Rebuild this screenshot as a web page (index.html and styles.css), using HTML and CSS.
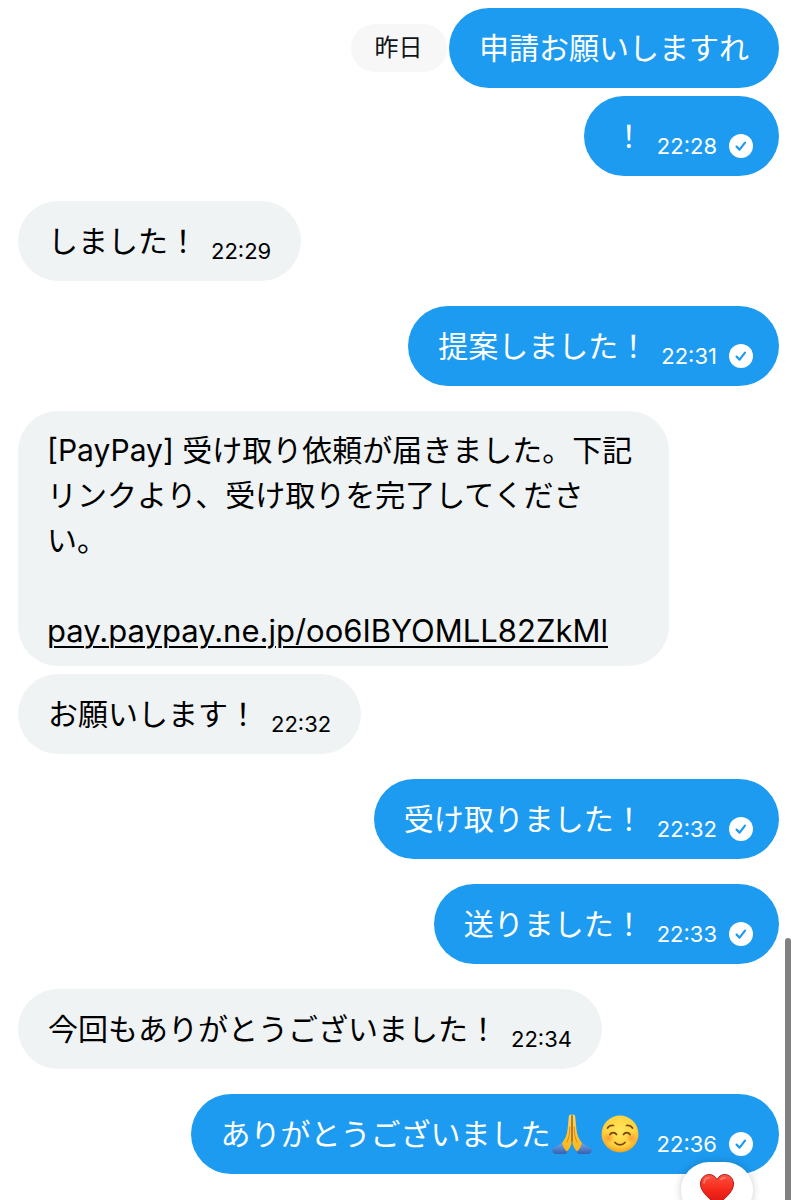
FILE: index.html
```
<!DOCTYPE html>
<html lang="ja">
<head>
    <meta charset="UTF-8">
    <meta name="viewport" content="width=device-width, initial-scale=1.0">
    <title>メッセージ</title>
    <link rel="stylesheet" href="styles.css">
</head>
<body>

    <!-- shared icons -->
    <svg class="defs" width="0" height="0" aria-hidden="true">
        <symbol id="check" viewBox="0 0 24 24">
            <circle cx="12" cy="12" r="12" fill="#fff"/>
            <path d="M7.600 12.600l3 3 5.400-7" fill="none" stroke="#1d9bf0" stroke-width="2.200" stroke-linecap="round" stroke-linejoin="round"/>
        </symbol>
    </svg>

    <main class="chat">
        <div class="date">昨日</div>

        <div class="message sent plain joined">
            <p class="text">申請お願いしますれ</p>
        </div>
        <div class="message sent">
            <p class="text">！</p>
            <time class="time">22:28</time>
            <svg class="check"><use href="#check"/></svg>
        </div>

        <div class="message received">
            <p class="text">しました！</p>
            <time class="time">22:29</time>
        </div>

        <div class="message sent">
            <p class="text">提案しました！</p>
            <time class="time">22:31</time>
            <svg class="check"><use href="#check"/></svg>
        </div>

        <div class="message received long joined">
            <p class="text">[PayPay] 受け取り依頼が届きました。下記リンクより、受け取りを完了してください。<br><br><a href="#">pay.paypay.ne.jp/oo6IBYOMLL82ZkMl</a></p>
        </div>
        <div class="message received">
            <p class="text">お願いします！</p>
            <time class="time">22:32</time>
        </div>

        <div class="message sent">
            <p class="text">受け取りました！</p>
            <time class="time">22:32</time>
            <svg class="check"><use href="#check"/></svg>
        </div>

        <div class="message sent">
            <p class="text">送りました！</p>
            <time class="time">22:33</time>
            <svg class="check"><use href="#check"/></svg>
        </div>

        <div class="message received">
            <p class="text">今回もありがとうございました！</p>
            <time class="time">22:34</time>
        </div>

        <div class="message sent">
            <p class="text">ありがとうございました</p>
            <svg class="emoji" viewBox="0 0 42 42" role="img" aria-label="合掌">
                <defs>
                    <linearGradient id="hand" x1="0" y1="0" x2="0" y2="1">
                        <stop offset="0" stop-color="#ffd55a"/>
                        <stop offset="1" stop-color="#fdb515"/>
                    </linearGradient>
                    <linearGradient id="sleeve" x1="0" y1="0" x2="0" y2="1">
                        <stop offset="0" stop-color="#6fa5e6"/>
                        <stop offset="1" stop-color="#3561b0"/>
                    </linearGradient>
                </defs>
                <path d="M1 36c3-2 7-4 10-6l6 8-2 3H4c-2-1-3-3-3-5zM41 36c-3-2-7-4-10-6l-6 8 2 3h11c2-1 3-3 3-5z" fill="url(#sleeve)"/>
                <path d="M20.700 2c-1.500-1-2.800 0-2.900 2L16.500 17c-.5 5-2.500 9-5.500 13 1 3.500 2.500 6.500 5 8.500 3-3 4.700-7 4.700-11z" fill="url(#hand)"/>
                <path d="M21.300 2c1.500-1 2.800 0 2.900 2L25.500 17c.5 5 2.500 9 5.500 13-1 3.500-2.500 6.500-5 8.500-3-3-4.700-7-4.700-11z" fill="url(#hand)"/>
                <path d="M21 3v25" fill="none" stroke="#a65a12" stroke-width="1.300" stroke-linecap="round"/>
                <path d="M18.700 14c.2 6-.8 11-2.700 15M23.300 14c-.2 6 .8 11 2.700 15" fill="none" stroke="#df8d14" stroke-width="1" stroke-linecap="round"/>
            </svg>
            <svg class="emoji smile" viewBox="0 0 38 38" role="img" aria-label="笑顔">
                <defs>
                    <radialGradient id="face" cx=".5" cy=".4" r=".62">
                        <stop offset="0" stop-color="#ffe65c"/>
                        <stop offset=".7" stop-color="#ffd13d"/>
                        <stop offset="1" stop-color="#f29a1c"/>
                    </radialGradient>
                    <radialGradient id="blush">
                        <stop offset="0" stop-color="#f9762c" stop-opacity=".6"/>
                        <stop offset="1" stop-color="#f9762c" stop-opacity="0"/>
                    </radialGradient>
                </defs>
                <circle cx="19" cy="19" r="18.500" fill="url(#face)"/>
                <circle cx="7.500" cy="23" r="6" fill="url(#blush)"/>
                <circle cx="30.500" cy="23" r="6" fill="url(#blush)"/>
                <g fill="none" stroke="#7a4412" stroke-width="1.700" stroke-linecap="round">
                    <path d="M6.500 13c1.300-2 3.600-3 6-2.500M31.500 13c-1.300-2-3.600-3-6-2.500"/>
                    <path d="M9 19.500c1.500-2.600 5-2.600 6.500 0M22.500 19.500c1.500-2.600 5-2.600 6.500 0"/>
                    <path d="M14 27.500c2.700 3.200 7.300 3.200 10 0"/>
                </g>
            </svg>
            <time class="time">22:36</time>
            <svg class="check"><use href="#check"/></svg>
            <button type="button" class="reaction" aria-label="ハート">
                <svg class="heart" viewBox="0 0 34 32">
                    <defs>
                        <linearGradient id="red" x1="0" y1="0" x2="0" y2="1">
                            <stop offset="0" stop-color="#ff5340"/>
                            <stop offset=".5" stop-color="#f5281b"/>
                            <stop offset="1" stop-color="#d91512"/>
                        </linearGradient>
                    </defs>
                    <path d="M17 31C13 27 .5 19.500.5 10 .5 4.500 4.500.5 9.300.5c3.400 0 6.200 2 7.700 5.200C18.500 2.500 21.300.5 24.700.5c4.800 0 8.800 4 8.800 9.500C33.500 19.500 21 27 17 31z" fill="url(#red)" stroke="#b01c18" stroke-width="1"/>
                    <path d="M4 9c.3-3 2.300-5 5-5.200M21 5.200c1-1 2.400-1.500 4-1.300" fill="none" stroke="#ff9c8c" stroke-width="1.600" stroke-linecap="round" opacity=".7"/>
                </svg>
            </button>
        </div>
    </main>

    <div class="scrollbar"></div>

</body>
</html>
```

FILE: styles.css
```
* {
    box-sizing: border-box;
}

body {
    margin: 0;
    background-color: #fff;
    color: #0f1419;
    font-family: Inter, "Noto Sans CJK JP", sans-serif;
    text-spacing-trim: space-all;
}

.defs {
    position: absolute;
}

.chat {
    position: relative;
    display: flex;
    flex-direction: column;
    height: 100vh;
    padding: 8px 18px;
    overflow: hidden;
}

/* floating date label */
.date {
    position: absolute;
    top: 24px;
    left: 50%;
    transform: translateX(-50%);
    padding: 0 24px;
    border-radius: 24px;
    background-color: #f7f7f7;
    font-size: 24px;
    line-height: 48px;
}

.message {
    position: relative;
    display: flex;
    flex-shrink: 0;
    align-items: center;
    max-width: 86%;
    min-height: 80px;
    margin-bottom: 25px;
    padding: 0 30px;
    border-radius: 40px;
}

.joined {
    margin-bottom: 8px;
}

.sent {
    align-self: flex-end;
    padding: 0 26px 0 30px;
    background-color: #1d9bf0;
    color: #fff;
}

.plain {
    padding: 0 30px;
}

.received {
    align-self: flex-start;
    background-color: #eff3f4;
    color: #000;
}

.long {
    padding: 17px 29px 12px;
}

.long .text {
    max-width: 593px;
}

.text {
    margin: 0;
    font-size: 30px;
    line-height: 45px;
}

.text a {
    color: inherit;
    font-size: 31px;
    text-decoration: underline;
    text-decoration-thickness: 2px;
    text-underline-offset: 4px;
}

.time {
    margin: 20px 0 0 13px;
    font-size: 22px;
    line-height: 30px;
}

.check {
    width: 24px;
    height: 24px;
    margin: 20px 0 0 12px;
}

.emoji {
    width: 42px;
    height: 42px;
}

.smile {
    width: 38px;
    height: 38px;
    margin-left: 8px;
    margin-right: 5px;
}

.reaction {
    position: absolute;
    right: 26px;
    top: 68px;
    width: 72px;
    height: 56px;
    padding: 0;
    border: none;
    border-radius: 28px;
    background-color: #fff;
    box-shadow: 0 0 8px rgba(0, 0, 0, 0.2);
    cursor: pointer;
}

.heart {
    display: block;
    width: 34px;
    height: 32px;
    margin: 0 auto;
}

.scrollbar {
    position: fixed;
    top: 938px;
    right: 6px;
    bottom: 0;
    width: 6px;
    border-radius: 3px 3px 0 0;
    background-color: #808080;
}
```
